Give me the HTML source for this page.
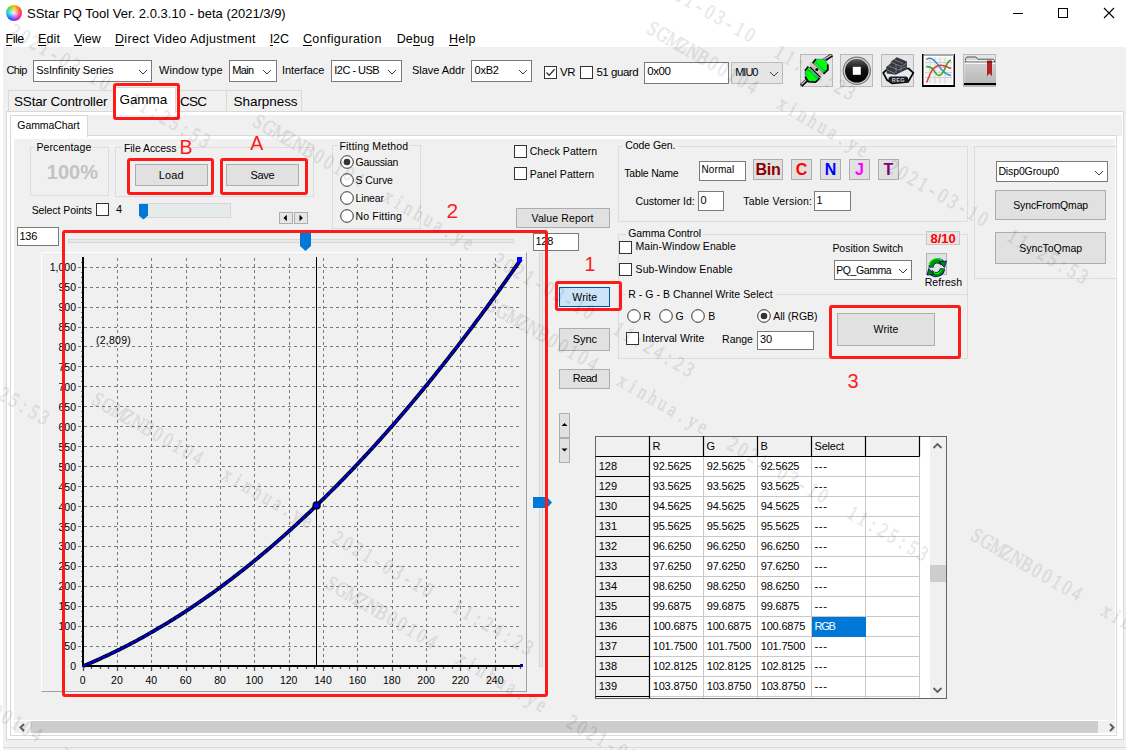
<!DOCTYPE html><html><head><meta charset="utf-8"><style>
html,body{margin:0;padding:0;}
body{width:1126px;height:750px;position:relative;overflow:hidden;background:#fff;font-family:"Liberation Sans",sans-serif;color:#000;}
.t{position:absolute;white-space:nowrap;line-height:1;}
.r{position:absolute;box-sizing:border-box;}
svg.r{overflow:visible;}
.u{text-decoration:underline;text-underline-offset:2px;}
.wm{transform-origin:0 0;transform:rotate(29.96deg) scaleX(0.78);font-family:'Liberation Serif',serif;font-size:21px;color:#000;-webkit-text-stroke:0.6px #000;opacity:0.09;pointer-events:none;}
.wm b{display:inline-block;width:14.81px;text-align:center;font-weight:normal;}
</style></head><body>
<div class="r" style="left:6px;top:5px;width:16px;height:16px;border-radius:50%;background:conic-gradient(from 0deg,#ffc000,#ff5020 60deg,#ff2080 120deg,#8030ff 180deg,#2060ff 220deg,#20d0f0 270deg,#40e040 310deg,#ffc000)"></div>
<div class="r" style="left:6px;top:5px;width:16px;height:16px;border-radius:50%;background:radial-gradient(circle,#fff 0,rgba(255,255,255,0.6) 20%,rgba(255,255,255,0) 60%)"></div>
<div class="t" style="left:27.00px;top:7.00px;font-size:13.00px;letter-spacing:0.005px;color:#000;">SStar PQ Tool Ver. 2.0.3.10 - beta (2021/3/9)</div>
<div class="r" style="left:1013.00px;top:13.00px;width:10.00px;height:1.00px;background:#000;"></div>
<div class="r" style="left:1058.00px;top:8.00px;width:10.00px;height:10.00px;border:1px solid #000;"></div>
<svg class="r" style="left:1103px;top:7px" width="12" height="12" viewBox="0 0 12 12"><path d="M1 1 L11 11 M11 1 L1 11" stroke="#000" stroke-width="1.1"/></svg>
<div class="t" style="left:5.60px;top:33.02px;font-size:12.50px;letter-spacing:-0.511px;">File</div>
<div class="r" style="left:5.60px;top:44.50px;width:6.63px;height:1.00px;background:#000;"></div>
<div class="t" style="left:38.00px;top:33.02px;font-size:12.50px;letter-spacing:0.115px;">Edit</div>
<div class="r" style="left:38.00px;top:44.50px;width:7.95px;height:1.00px;background:#000;"></div>
<div class="t" style="left:74.00px;top:33.02px;font-size:12.50px;letter-spacing:-0.017px;">View</div>
<div class="r" style="left:74.00px;top:44.50px;width:7.82px;height:1.00px;background:#000;"></div>
<div class="t" style="left:115.00px;top:33.02px;font-size:12.50px;letter-spacing:0.331px;">Direct Video Adjustment</div>
<div class="r" style="left:115.00px;top:44.50px;width:8.86px;height:1.00px;background:#000;"></div>
<div class="t" style="left:269.70px;top:33.02px;font-size:12.50px;letter-spacing:-0.051px;">I2C</div>
<div class="r" style="left:269.70px;top:44.50px;width:2.92px;height:1.00px;background:#000;"></div>
<div class="t" style="left:303.00px;top:33.02px;font-size:12.50px;letter-spacing:0.334px;">Configuration</div>
<div class="r" style="left:303.00px;top:44.50px;width:8.86px;height:1.00px;background:#000;"></div>
<div class="t" style="left:396.70px;top:33.02px;font-size:12.50px;letter-spacing:0.153px;">Debug</div>
<div class="r" style="left:412.99px;top:44.50px;width:6.60px;height:1.00px;background:#000;"></div>
<div class="t" style="left:449.00px;top:33.02px;font-size:12.50px;letter-spacing:0.223px;">Help</div>
<div class="r" style="left:449.00px;top:44.50px;width:8.75px;height:1.00px;background:#000;"></div>
<div class="r" style="left:3.00px;top:47.00px;width:1123.00px;height:703.00px;background:#f0f0f0;"></div>
<div class="r" style="left:3.00px;top:747.00px;width:1123.00px;height:1.00px;background:#dadada;"></div>
<div class="t" style="left:6.40px;top:65.29px;font-size:11.00px;letter-spacing:-0.581px;">Chip</div>
<div class="r" style="left:33.00px;top:60.00px;width:119.00px;height:21.50px;background:#fff;border:1px solid #7a7a7a;"></div>
<div class="t" style="left:36.30px;top:65.09px;font-size:11.00px;letter-spacing:-0.110px;color:#000;">SsInfinity Series</div>
<svg class="r" style="left:137.5px;top:68.5px" width="10" height="6" viewBox="0 0 10 6"><path d="M1 1 L5 5 L9 1" fill="none" stroke="#404040" stroke-width="1"/></svg>
<div class="t" style="left:159.00px;top:65.29px;font-size:11.00px;letter-spacing:0.057px;">Window type</div>
<div class="r" style="left:229.00px;top:60.00px;width:47.50px;height:21.50px;background:#fff;border:1px solid #7a7a7a;"></div>
<div class="t" style="left:232.30px;top:65.09px;font-size:11.00px;letter-spacing:-0.636px;color:#000;">Main</div>
<svg class="r" style="left:262.0px;top:68.5px" width="10" height="6" viewBox="0 0 10 6"><path d="M1 1 L5 5 L9 1" fill="none" stroke="#404040" stroke-width="1"/></svg>
<div class="t" style="left:282.00px;top:65.29px;font-size:11.00px;letter-spacing:-0.067px;">Interface</div>
<div class="r" style="left:331.00px;top:60.00px;width:70.50px;height:21.50px;background:#fff;border:1px solid #7a7a7a;"></div>
<div class="t" style="left:334.30px;top:65.09px;font-size:11.00px;letter-spacing:-0.512px;color:#000;">I2C - USB</div>
<svg class="r" style="left:387.0px;top:68.5px" width="10" height="6" viewBox="0 0 10 6"><path d="M1 1 L5 5 L9 1" fill="none" stroke="#404040" stroke-width="1"/></svg>
<div class="t" style="left:412.00px;top:65.29px;font-size:11.00px;letter-spacing:-0.040px;">Slave Addr</div>
<div class="r" style="left:471.00px;top:60.00px;width:61.00px;height:21.50px;background:#fff;border:1px solid #7a7a7a;"></div>
<div class="t" style="left:474.60px;top:65.09px;font-size:11.00px;letter-spacing:-0.243px;color:#000;">0xB2</div>
<svg class="r" style="left:517.5px;top:68.5px" width="10" height="6" viewBox="0 0 10 6"><path d="M1 1 L5 5 L9 1" fill="none" stroke="#404040" stroke-width="1"/></svg>
<div class="r" style="left:544.00px;top:66.00px;width:13.00px;height:13.00px;background:#fff;border:1px solid #333;"></div>
<svg class="r" style="left:544.0px;top:66.0px" width="13" height="13" viewBox="0 0 13 13"><path d="M2.5 6.5 L5.2 9.3 L10.6 3.2" fill="none" stroke="#333" stroke-width="1.3"/></svg>
<div class="t" style="left:560.00px;top:67.27px;font-size:11.50px;letter-spacing:-0.488px;">VR</div>
<div class="r" style="left:580.00px;top:66.00px;width:13.00px;height:13.00px;background:#fff;border:1px solid #333;"></div>
<div class="t" style="left:596.40px;top:67.27px;font-size:11.50px;letter-spacing:-0.450px;">51 guard</div>
<div class="r" style="left:644.00px;top:62.00px;width:85.00px;height:21.50px;background:#fff;border:1px solid #7a7a7a;"></div>
<div class="t" style="left:647.20px;top:66.37px;font-size:11.50px;letter-spacing:-0.409px;">0x00</div>
<div class="r" style="left:731.00px;top:62.00px;width:52.00px;height:21.50px;background:#e5e5e5;border:1px solid #bcbcbc;"></div>
<div class="t" style="left:735.20px;top:67.19px;font-size:11.00px;letter-spacing:-0.995px;color:#000;">MIU0</div>
<svg class="r" style="left:768.5px;top:70.5px" width="10" height="6" viewBox="0 0 10 6"><path d="M1 1 L5 5 L9 1" fill="none" stroke="#404040" stroke-width="1"/></svg>
<div class="r" style="left:800.00px;top:54.00px;width:33.00px;height:33.00px;background:#e5e5e5;border:1px solid #b9b9b9;"></div>
<div class="r" style="left:840.00px;top:54.00px;width:33.00px;height:33.00px;background:#e5e5e5;border:1px solid #b9b9b9;"></div>
<div class="r" style="left:881.00px;top:54.00px;width:33.00px;height:33.00px;background:#e5e5e5;border:1px solid #b9b9b9;"></div>
<div class="r" style="left:922.00px;top:54.00px;width:33.00px;height:33.00px;background:#e5e5e5;border:1px solid #b9b9b9;"></div>
<div class="r" style="left:963.00px;top:54.00px;width:33.00px;height:33.00px;background:#e5e5e5;border:1px solid #b9b9b9;"></div>
<svg class="r" style="left:800px;top:54px;overflow:hidden" width="33" height="33" viewBox="0 0 33 33">
<path d="M1.2 31.5 L8.5 24.5" stroke="#000" stroke-width="3.6"/><path d="M1.5 30.5 L8.5 23.8" stroke="#c8c8c8" stroke-width="1.4"/>
<path d="M23 7 L32 1" stroke="#000" stroke-width="3.6"/><path d="M23 6.2 L31.5 0.8" stroke="#c8c8c8" stroke-width="1.4"/>
<circle cx="8" cy="24.5" r="1.8" fill="#e0d8d0"/><circle cx="24" cy="7" r="1.8" fill="#e0d8d0"/>
<path d="M9.5 11.5 L13.5 7.5 L24 18 L20 22.5 Z" fill="#d9c9b3"/><path d="M10 13 L20.5 23.5" stroke="#000" stroke-width="1.2"/>
<circle cx="16.8" cy="15.4" r="1.5" fill="#000"/>
<g transform="translate(0.9 -0.9)"><path d="M12.2 9.7 L15.2 6.1 L23.3 6.1 L26.9 11.2 L26.9 16.7 L22.8 20.3 Z" fill="#00ff00" stroke="#3a66d8" stroke-width="0.7"/>
<path d="M11.8 10 L15 6 M26.9 11.5 L26.9 16.8 L22.6 20.8" fill="none" stroke="#000" stroke-width="1.7"/>
<path d="M15.2 9.2 L24.5 18.5" stroke="#3a66d8" stroke-width="0.8"/></g>
<g transform="translate(-0.7 0.7)"><path d="M9.1 12.2 L19.8 23.3 L16.2 26.9 L9.1 26.4 L6.1 21.8 L6.1 16.2 Z" fill="#00ff00" stroke="#3a66d8" stroke-width="0.7"/>
<path d="M5.6 16 L9 11.8 M20.2 23.6 L16.3 27.5 L9 27 L5.8 22" fill="none" stroke="#000" stroke-width="1.6"/>
<path d="M8.8 15 L18.5 24.6" stroke="#3a66d8" stroke-width="0.8"/></g>
</svg>
<svg class="r" style="left:840px;top:54px" width="33" height="33" viewBox="0 0 33 33">
<defs><linearGradient id="sg" x1="0" y1="0" x2="0" y2="1"><stop offset="0" stop-color="#5a5a5a"/><stop offset="0.45" stop-color="#111"/><stop offset="1" stop-color="#000"/></linearGradient></defs>
<circle cx="16.8" cy="16.8" r="13.6" fill="#d4d4d4" stroke="#7a7a7a" stroke-width="1.2"/>
<circle cx="16.8" cy="16.8" r="11.8" fill="url(#sg)"/>
<rect x="12.8" y="12.8" width="8" height="8" fill="#fff"/>
</svg>
<svg class="r" style="left:881px;top:54px" width="33" height="33" viewBox="0 0 33 33">
<path d="M2.2 18.8 L7 14.5 H27.5 L32.4 18.8 L27 28 L11 29.3 L6 26 Z" fill="#e6ebf0" stroke="#050505" stroke-width="1.7" stroke-linejoin="round"/>
<path d="M5.2 13 L9.5 9.5 L10 7.5 L15.8 3.2 L25.9 7.6 L25.9 15.3 L14.8 20.8 L5.7 19.6 Z" fill="#34383e"/>
<path d="M10 8 L20 12.5 L25.5 9.5 M7 11.5 L17 16 L25.5 12.5 M5.5 15.5 L14 19.5 M13 5.5 L22 9.5 M15 10 V19 M20 12.5 V17.5" stroke="#7b828a" stroke-width="0.9" fill="none"/>
<rect x="7.4" y="22.5" width="19.9" height="6" rx="3" fill="#1a1a1a"/>
<text x="17.4" y="27.6" font-family="Liberation Sans" font-size="5.6" font-weight="bold" fill="#d0d0d0" text-anchor="middle" letter-spacing="0.4">REG</text>
</svg>
<svg class="r" style="left:922px;top:54px" width="33" height="33" viewBox="0 0 33 33">
<rect x="0" y="0" width="33" height="33" fill="#000"/>
<rect x="1.5" y="0" width="30.5" height="2" fill="#a8a8a8"/>
<rect x="1.5" y="2" width="30" height="29" fill="#fff"/>
<rect x="3" y="3.5" width="27" height="26" fill="#f2f2f2"/>
<path d="M8 3.5 V29.5 M13 3.5 V29.5 M18 3.5 V29.5 M23 3.5 V29.5 M3 8.5 H30 M3 13.5 H30 M3 18.5 H30 M3 23.5 H30" stroke="#d2d2d2" stroke-width="1"/>
<path d="M4.4 5.5 C6 4.2, 8 3.8, 10 4.8 C14 7, 17 12, 20 16 C23 19.5, 26 21, 28.9 21.5" fill="none" stroke="#2a90d8" stroke-width="1.5"/>
<path d="M4.4 12.6 C7 12.4, 9 13, 11.5 16 C13.5 19, 15 21.5, 17 21.5 C20 21.5, 22 17, 24 12 C25.5 8.5, 27 6.5, 28.9 6.2" fill="none" stroke="#3aa020" stroke-width="1.5"/>
<path d="M4.7 28.6 C7 22, 9 17, 12 14 C14.5 11.8, 16.5 11, 19 11.2 C23 11.5, 26 13, 28.9 14.7" fill="none" stroke="#d84030" stroke-width="1.5"/>
</svg>
<svg class="r" style="left:963px;top:54px" width="33" height="33" viewBox="0 0 33 33">
<defs><linearGradient id="fg" x1="0" y1="0" x2="0" y2="1"><stop offset="0" stop-color="#d2d2d2"/><stop offset="1" stop-color="#b8b8b8"/></linearGradient></defs>
<path d="M2.5 12 V4.5 L4 3 H13 L15 5.2 H30.5 L31.5 6.5 V12 Z" fill="#d8d8d8" stroke="#555" stroke-width="1"/>
<path d="M2.5 6.5 H31" stroke="#f0f0f0" stroke-width="1"/>
<rect x="1.5" y="8.5" width="31" height="21" fill="url(#fg)"/>
<rect x="1.5" y="8.3" width="31" height="1.6" fill="#fafafa"/>
<path d="M1.5 8 H32.5" stroke="#606060" stroke-width="0.8"/>
<rect x="1" y="29" width="32" height="2.2" fill="#000"/>
<path d="M24 6.8 H29 V22.2 L26.5 19.5 L24 22.2 Z" fill="#b02428"/>
<rect x="24" y="6.8" width="5" height="1.8" fill="#801818"/>
</svg>
<div class="r" style="left:6.00px;top:111.00px;width:1118.00px;height:629.00px;background:#fff;border:1px solid #d9d9d9;"></div>
<div class="r" style="left:8.00px;top:90.00px;width:107.00px;height:22.00px;background:#f0f0f0;border:1px solid #d9d9d9;"></div>
<div class="r" style="left:175.00px;top:90.00px;width:52.00px;height:22.00px;background:#f0f0f0;border:1px solid #d9d9d9;"></div>
<div class="r" style="left:226.00px;top:90.00px;width:76.00px;height:22.00px;background:#f0f0f0;border:1px solid #d9d9d9;"></div>
<div class="r" style="left:113.00px;top:87.00px;width:63.00px;height:26.00px;background:#fff;border:1px solid #d9d9d9;border-bottom:none;"></div>
<div class="t" style="left:14.00px;top:94.57px;font-size:13.50px;letter-spacing:-0.171px;">SStar Controller</div>
<div class="t" style="left:119.50px;top:92.57px;font-size:13.50px;letter-spacing:-0.082px;">Gamma</div>
<div class="t" style="left:180.00px;top:94.57px;font-size:13.50px;letter-spacing:-0.768px;">CSC</div>
<div class="t" style="left:233.60px;top:94.57px;font-size:13.50px;letter-spacing:-0.071px;">Sharpness</div>
<div class="r" style="left:10.00px;top:115.00px;width:1112.00px;height:21.00px;background:#f0f0f0;"></div>
<div class="r" style="left:10.00px;top:135.00px;width:1107.00px;height:601.00px;background:#fff;border:1px solid #d9d9d9;"></div>
<div class="r" style="left:10.00px;top:115.00px;width:78.00px;height:22.00px;background:#fff;border:1px solid #d9d9d9;border-bottom:none;"></div>
<div class="t" style="left:17.30px;top:119.81px;font-size:10.50px;letter-spacing:-0.082px;">GammaChart</div>
<div class="r" style="left:14.00px;top:139.00px;width:1101.00px;height:581.00px;background:#f0f0f0;"></div>
<div class="r" style="left:14.00px;top:721.00px;width:1101.00px;height:12.00px;background:#f0f0f0;"></div>
<div class="r" style="left:31.00px;top:721.00px;width:1067.00px;height:12.00px;background:#cdcdcd;"></div>
<svg class="r" style="left:18px;top:723px" width="8" height="9" viewBox="0 0 8 9"><path d="M6 1 L2.5 4.5 L6 8" fill="none" stroke="#606060" stroke-width="2"/></svg>
<svg class="r" style="left:1108px;top:723px" width="8" height="9" viewBox="0 0 8 9"><path d="M2 1 L5.5 4.5 L2 8" fill="none" stroke="#606060" stroke-width="2"/></svg>
<div class="r" style="left:29.5px;top:146.5px;width:79.5px;height:49.0px;border-top:1px solid #dcdcdc;border-left:1px solid #dcdcdc;border-right:1px solid #dcdcdc;border-bottom:1px solid #dcdcdc;"></div>
<div class="r" style="left:34.40px;top:144.50px;width:59.00px;height:5.00px;background:#f0f0f0;"></div>
<div class="t" style="left:36.40px;top:142.11px;font-size:10.50px;letter-spacing:0.129px;">Percentage</div>
<div class="t" style="left:46.80px;top:162.27px;font-size:20.00px;color:#c3c3c3;font-weight:bold;">100%</div>
<div class="r" style="left:114.5px;top:147.0px;width:199.5px;height:49.5px;border-top:1px solid #dcdcdc;border-left:1px solid #dcdcdc;border-right:1px solid #dcdcdc;border-bottom:1px solid #dcdcdc;"></div>
<div class="r" style="left:122.00px;top:145.00px;width:56.40px;height:5.00px;background:#f0f0f0;"></div>
<div class="t" style="left:124.00px;top:142.61px;font-size:10.50px;letter-spacing:-0.064px;">File Access</div>
<div class="r" style="left:134.80px;top:164.20px;width:72.90px;height:21.50px;background:#e1e1e1;border:1px solid #adadad;"></div>
<div class="t" style="left:158.75px;top:169.60px;font-size:11.00px;letter-spacing:0.132px;color:#000;">Load</div>
<div class="r" style="left:225.90px;top:164.20px;width:73.10px;height:21.50px;background:#e1e1e1;border:1px solid #adadad;"></div>
<div class="t" style="left:250.45px;top:169.60px;font-size:11.00px;letter-spacing:-0.268px;color:#000;">Save</div>
<div class="t" style="left:31.70px;top:204.81px;font-size:10.50px;letter-spacing:-0.083px;">Select Points</div>
<div class="r" style="left:96.00px;top:203.00px;width:13.00px;height:13.00px;background:#fff;border:1px solid #333;"></div>
<div class="t" style="left:116.00px;top:204.39px;font-size:11.00px;">4</div>
<div class="r" style="left:139.00px;top:203.00px;width:92.00px;height:15.00px;background:#e7eaea;border:1px solid #d6d6d6;"></div>
<svg class="r" style="left:139px;top:203.5px" width="9" height="16" viewBox="0 0 9 16"><path d="M0 0 H9 V11.5 L4.5 15.5 L0 11.5 Z" fill="#0078d7"/></svg>
<div class="r" style="left:279.00px;top:212.00px;width:14.00px;height:12.00px;background:#e6e6e6;border:1px solid #adadad;"></div>
<div class="r" style="left:294.20px;top:212.00px;width:13.80px;height:12.00px;background:#e6e6e6;border:1px solid #adadad;"></div>
<svg class="r" style="left:282px;top:214px" width="8" height="8"><path d="M1.5 4 L4.8 0.8 V7.2 Z" fill="#000"/></svg>
<svg class="r" style="left:296.5px;top:214px" width="8" height="8"><path d="M5.8 4 L2.5 0.8 V7.2 Z" fill="#000"/></svg>
<div class="r" style="left:332.0px;top:145.0px;width:89.0px;height:83.5px;border-top:1px solid #dcdcdc;border-left:1px solid #dcdcdc;border-right:1px solid #dcdcdc;border-bottom:1px solid #dcdcdc;"></div>
<div class="r" style="left:337.50px;top:143.00px;width:72.80px;height:5.00px;background:#f0f0f0;"></div>
<div class="t" style="left:339.50px;top:141.11px;font-size:10.50px;letter-spacing:0.162px;">Fitting Method</div>
<svg class="r" style="left:339.7px;top:155.0px" width="14" height="14" viewBox="0 0 14 14"><circle cx="7" cy="7" r="6.3" fill="#fff" stroke="#333" stroke-width="1"/><circle cx="7" cy="7" r="3.3" fill="#333"/></svg>
<div class="t" style="left:355.50px;top:157.11px;font-size:10.50px;letter-spacing:-0.207px;">Gaussian</div>
<svg class="r" style="left:339.7px;top:173.0px" width="14" height="14" viewBox="0 0 14 14"><circle cx="7" cy="7" r="6.3" fill="#fff" stroke="#333" stroke-width="1"/></svg>
<div class="t" style="left:355.50px;top:175.11px;font-size:10.50px;letter-spacing:-0.090px;">S Curve</div>
<svg class="r" style="left:339.7px;top:191.0px" width="14" height="14" viewBox="0 0 14 14"><circle cx="7" cy="7" r="6.3" fill="#fff" stroke="#333" stroke-width="1"/></svg>
<div class="t" style="left:355.50px;top:193.11px;font-size:10.50px;letter-spacing:-0.132px;">Linear</div>
<svg class="r" style="left:339.7px;top:209.0px" width="14" height="14" viewBox="0 0 14 14"><circle cx="7" cy="7" r="6.3" fill="#fff" stroke="#333" stroke-width="1"/></svg>
<div class="t" style="left:355.50px;top:211.11px;font-size:10.50px;letter-spacing:0.157px;">No Fitting</div>
<div class="r" style="left:514.20px;top:144.50px;width:13.00px;height:13.00px;background:#fff;border:1px solid #333;"></div>
<div class="t" style="left:529.70px;top:146.11px;font-size:10.50px;letter-spacing:0.082px;">Check Pattern</div>
<div class="r" style="left:514.20px;top:167.00px;width:13.00px;height:13.00px;background:#fff;border:1px solid #333;"></div>
<div class="t" style="left:529.70px;top:169.11px;font-size:10.50px;letter-spacing:0.059px;">Panel Pattern</div>
<div class="r" style="left:515.50px;top:208.20px;width:94.10px;height:19.80px;background:#e1e1e1;border:1px solid #adadad;"></div>
<div class="t" style="left:531.55px;top:212.99px;font-size:10.50px;letter-spacing:0.124px;color:#000;">Value Report</div>
<div class="r" style="left:617.5px;top:145.5px;width:350.5px;height:76.0px;border-top:1px solid #dcdcdc;border-left:1px solid #dcdcdc;border-right:1px solid #dcdcdc;border-bottom:1px solid #dcdcdc;"></div>
<div class="r" style="left:623.20px;top:143.50px;width:54.30px;height:5.00px;background:#f0f0f0;"></div>
<div class="t" style="left:625.20px;top:139.71px;font-size:10.50px;letter-spacing:-0.054px;">Code Gen.</div>
<div class="t" style="left:624.30px;top:168.11px;font-size:10.50px;letter-spacing:-0.183px;">Table Name</div>
<div class="r" style="left:699.00px;top:161.00px;width:47.00px;height:20.00px;background:#fff;border:1px solid #7a7a7a;"></div>
<div class="t" style="left:701.50px;top:165.34px;font-size:10.00px;letter-spacing:0.095px;">Normal</div>
<div class="r" style="left:753.00px;top:159.20px;width:30.00px;height:20.80px;background:#e1e1e1;border:1px solid #adadad;"></div>
<div class="t" style="left:755.40px;top:162.06px;font-size:16.00px;letter-spacing:-0.191px;color:#8b0000;font-weight:bold;">Bin</div>
<div class="r" style="left:791.00px;top:159.20px;width:21.00px;height:20.80px;background:#e1e1e1;border:1px solid #adadad;"></div>
<div class="t" style="left:795.72px;top:162.06px;font-size:16.00px;color:#ff0000;font-weight:bold;">C</div>
<div class="r" style="left:820.00px;top:159.20px;width:21.00px;height:20.80px;background:#e1e1e1;border:1px solid #adadad;"></div>
<div class="t" style="left:824.72px;top:162.06px;font-size:16.00px;color:#0000ff;font-weight:bold;">N</div>
<div class="r" style="left:849.00px;top:159.20px;width:21.00px;height:20.80px;background:#e1e1e1;border:1px solid #adadad;"></div>
<div class="t" style="left:855.05px;top:162.06px;font-size:16.00px;color:#ff00ff;font-weight:bold;">J</div>
<div class="r" style="left:878.00px;top:159.20px;width:21.00px;height:20.80px;background:#e1e1e1;border:1px solid #adadad;"></div>
<div class="t" style="left:883.61px;top:162.06px;font-size:16.00px;color:#800080;font-weight:bold;">T</div>
<div class="t" style="left:635.50px;top:195.71px;font-size:10.50px;letter-spacing:-0.092px;">Customer Id:</div>
<div class="r" style="left:698.00px;top:191.00px;width:26.00px;height:20.00px;background:#fff;border:1px solid #7a7a7a;"></div>
<div class="t" style="left:700.50px;top:195.19px;font-size:11.00px;">0</div>
<div class="t" style="left:743.20px;top:195.71px;font-size:10.50px;letter-spacing:0.217px;">Table Version:</div>
<div class="r" style="left:814.00px;top:191.00px;width:37.00px;height:20.00px;background:#fff;border:1px solid #7a7a7a;"></div>
<div class="t" style="left:816.50px;top:195.19px;font-size:11.00px;">1</div>
<div class="r" style="left:617.5px;top:233.5px;width:350.5px;height:125.0px;border-top:1px solid #dcdcdc;border-left:1px solid #dcdcdc;border-right:1px solid #dcdcdc;border-bottom:1px solid #dcdcdc;"></div>
<div class="r" style="left:626.20px;top:231.50px;width:76.80px;height:5.00px;background:#f0f0f0;"></div>
<div class="t" style="left:628.20px;top:228.31px;font-size:10.50px;letter-spacing:-0.101px;">Gamma Control</div>
<div class="r" style="left:619.30px;top:240.50px;width:13.00px;height:13.00px;background:#fff;border:1px solid #333;"></div>
<div class="t" style="left:635.50px;top:241.01px;font-size:10.50px;letter-spacing:0.066px;">Main-Window Enable</div>
<div class="r" style="left:619.30px;top:263.30px;width:13.00px;height:13.00px;background:#fff;border:1px solid #333;"></div>
<div class="t" style="left:635.50px;top:263.81px;font-size:10.50px;letter-spacing:0.127px;">Sub-Window Enable</div>
<div class="t" style="left:832.40px;top:243.11px;font-size:10.50px;letter-spacing:-0.027px;">Position Switch</div>
<div class="r" style="left:834.00px;top:260.40px;width:78.00px;height:20.10px;background:#fff;border:1px solid #7a7a7a;"></div>
<div class="t" style="left:836.30px;top:265.11px;font-size:10.50px;letter-spacing:-0.431px;color:#000;">PQ_Gamma</div>
<svg class="r" style="left:897.5px;top:268.2px" width="10" height="6" viewBox="0 0 10 6"><path d="M1 1 L5 5 L9 1" fill="none" stroke="#404040" stroke-width="1"/></svg>
<div class="r" style="left:926.30px;top:230.50px;width:33.70px;height:14.00px;background:#e5e5e5;border:1px solid #c8c8c8;"></div>
<div class="t" style="left:930.60px;top:231.70px;font-size:13.00px;letter-spacing:-0.076px;color:#ff0000;font-weight:bold;">8/10</div>
<div class="r" style="left:926.00px;top:253.00px;width:20.50px;height:22.00px;background:#e1e1e1;border:1px solid #b4b4b4;"></div>
<svg class="r" style="left:926px;top:253px" width="21" height="23" viewBox="0 0 21 23">
<path d="M5 14.5 A6.5 6.5 0 0 1 17 11" fill="none" stroke="#000080" stroke-width="5"/>
<path d="M5 14.5 A6.5 6.5 0 0 1 17 11" fill="none" stroke="#008a00" stroke-width="3.6"/>
<path d="M3.6 12 A7.5 7.5 0 0 1 16 7.5" fill="none" stroke="#00ff00" stroke-width="1.3"/>
<path d="M13 9 L20.5 8 L18.5 14.5 Z" fill="#008a00" stroke="#000080" stroke-width="0.8"/>
<path d="M16.5 15.5 A6.5 6.5 0 0 1 4.5 18.5" fill="none" stroke="#000080" stroke-width="5"/>
<path d="M16.5 15.5 A6.5 6.5 0 0 1 4.5 18.5" fill="none" stroke="#008a00" stroke-width="3.6"/>
<path d="M15.2 16.5 A4.5 4.5 0 0 1 8 19.5" fill="none" stroke="#00ff00" stroke-width="1.2"/>
<path d="M8 21.5 L1 22 L2.8 15.5 Z" fill="#008a00" stroke="#000080" stroke-width="0.8"/>
</svg>
<div class="t" style="left:924.70px;top:277.11px;font-size:10.50px;letter-spacing:0.091px;">Refresh</div>
<div class="r" style="left:617.50px;top:294.00px;width:350.50px;height:1.00px;background:#dcdcdc;"></div>
<div class="r" style="left:626.00px;top:290.00px;width:150.00px;height:6.00px;background:#f0f0f0;"></div>
<div class="t" style="left:628.20px;top:288.91px;font-size:10.50px;letter-spacing:0.058px;">R - G - B Channel Write Select</div>
<svg class="r" style="left:626.5px;top:308.8px" width="14" height="14" viewBox="0 0 14 14"><circle cx="7" cy="7" r="6.3" fill="#fff" stroke="#333" stroke-width="1"/></svg>
<div class="t" style="left:643.30px;top:310.51px;font-size:10.50px;">R</div>
<svg class="r" style="left:658.8px;top:308.8px" width="14" height="14" viewBox="0 0 14 14"><circle cx="7" cy="7" r="6.3" fill="#fff" stroke="#333" stroke-width="1"/></svg>
<div class="t" style="left:675.50px;top:310.51px;font-size:10.50px;">G</div>
<svg class="r" style="left:691.2px;top:308.8px" width="14" height="14" viewBox="0 0 14 14"><circle cx="7" cy="7" r="6.3" fill="#fff" stroke="#333" stroke-width="1"/></svg>
<div class="t" style="left:708.30px;top:310.51px;font-size:10.50px;">B</div>
<svg class="r" style="left:756.5px;top:308.8px" width="14" height="14" viewBox="0 0 14 14"><circle cx="7" cy="7" r="6.3" fill="#fff" stroke="#333" stroke-width="1"/><circle cx="7" cy="7" r="3.3" fill="#333"/></svg>
<div class="t" style="left:773.20px;top:310.51px;font-size:10.50px;letter-spacing:0.007px;">All (RGB)</div>
<div class="r" style="left:626.20px;top:332.00px;width:13.00px;height:13.00px;background:#fff;border:1px solid #333;"></div>
<div class="t" style="left:642.20px;top:333.11px;font-size:10.50px;letter-spacing:0.039px;">Interval Write</div>
<div class="t" style="left:722.10px;top:333.81px;font-size:10.50px;letter-spacing:-0.048px;">Range</div>
<div class="r" style="left:757.20px;top:330.50px;width:56.80px;height:19.00px;background:#fff;border:1px solid #7a7a7a;"></div>
<div class="t" style="left:760.00px;top:334.19px;font-size:11.00px;">30</div>
<div class="r" style="left:837.20px;top:313.00px;width:97.80px;height:33.00px;background:#e1e1e1;border:1px solid #adadad;"></div>
<div class="t" style="left:873.60px;top:324.39px;font-size:10.50px;letter-spacing:0.138px;color:#000;">Write</div>
<div class="r" style="left:974.4px;top:146.4px;width:141.6px;height:133.1px;border-top:1px solid #dcdcdc;border-left:1px solid #dcdcdc;border-bottom:1px solid #dcdcdc;"></div>
<div class="r" style="left:996.00px;top:161.30px;width:112.00px;height:20.70px;background:#fff;border:1px solid #7a7a7a;"></div>
<div class="t" style="left:998.40px;top:166.31px;font-size:10.50px;letter-spacing:-0.124px;color:#000;">Disp0Group0</div>
<svg class="r" style="left:1093.5px;top:169.5px" width="10" height="6" viewBox="0 0 10 6"><path d="M1 1 L5 5 L9 1" fill="none" stroke="#404040" stroke-width="1"/></svg>
<div class="r" style="left:995.30px;top:189.60px;width:110.70px;height:30.90px;background:#e1e1e1;border:1px solid #adadad;"></div>
<div class="t" style="left:1013.20px;top:200.41px;font-size:10.50px;letter-spacing:-0.128px;color:#000;">SyncFromQmap</div>
<div class="r" style="left:995.30px;top:232.00px;width:110.70px;height:32.00px;background:#e1e1e1;border:1px solid #adadad;"></div>
<div class="t" style="left:1019.20px;top:243.11px;font-size:10.50px;letter-spacing:-0.013px;color:#000;">SyncToQmap</div>
<div class="r" style="left:559.20px;top:286.90px;width:51.30px;height:19.90px;background:#cce4f7;border:1px solid #005499;"></div>
<div class="t" style="left:572.35px;top:291.74px;font-size:10.50px;letter-spacing:0.138px;color:#000;">Write</div>
<div class="r" style="left:559.20px;top:328.00px;width:51.30px;height:22.50px;background:#e1e1e1;border:1px solid #adadad;"></div>
<div class="t" style="left:572.85px;top:333.90px;font-size:11.00px;letter-spacing:-0.114px;color:#000;">Sync</div>
<div class="r" style="left:559.20px;top:369.00px;width:51.30px;height:19.50px;background:#e1e1e1;border:1px solid #adadad;"></div>
<div class="t" style="left:572.85px;top:373.40px;font-size:11.00px;letter-spacing:-0.574px;color:#000;">Read</div>
<div class="r" style="left:559.20px;top:413.20px;width:10.80px;height:25.30px;background:#e1e1e1;border:1px solid #adadad;"></div>
<div class="r" style="left:559.20px;top:437.50px;width:10.80px;height:25.00px;background:#e1e1e1;border:1px solid #adadad;"></div>
<svg class="r" style="left:561px;top:422px" width="7" height="6"><path d="M0.5 4 L3.5 1 L6.5 4 Z" fill="#000"/></svg>
<svg class="r" style="left:561px;top:447px" width="7" height="6"><path d="M0.5 1.5 L3.5 4.5 L6.5 1.5 Z" fill="#000"/></svg>
<div class="r" style="left:17.10px;top:227.30px;width:41.90px;height:18.70px;background:#fff;border:1px solid #7a7a7a;"></div>
<div class="t" style="left:19.50px;top:230.69px;font-size:11.00px;letter-spacing:-0.285px;">136</div>
<div class="r" style="left:533.20px;top:232.50px;width:45.80px;height:18.50px;background:#fff;border:1px solid #7a7a7a;"></div>
<div class="t" style="left:535.50px;top:235.69px;font-size:11.00px;letter-spacing:-0.285px;">128</div>
<div class="r" style="left:41.00px;top:252.00px;width:486.00px;height:439.50px;background:#f0f0f0;border-left:1px solid #fff;border-top:1px solid #fff;border-right:1px solid #a0a0a0;border-bottom:1px solid #a0a0a0;"></div>
<div class="r" style="left:68.00px;top:239.00px;width:446.00px;height:4.00px;background:#e7eaea;border:1px solid #d6d6d6;"></div>
<svg class="r" style="left:300px;top:233px" width="11" height="18" viewBox="0 0 11 18"><path d="M0 0 H11 V13 L5.5 18 L0 13 Z" fill="#0078d7"/></svg>
<div class="r" style="left:539.40px;top:253.40px;width:3.60px;height:413.60px;background:#e7eaea;border:1px solid #d6d6d6;"></div>
<svg class="r" style="left:532.7px;top:497.3px" width="19" height="11" viewBox="0 0 19 11"><path d="M0 0 H14 L19 5.5 L14 11 H0 Z" fill="#0078d7"/></svg>
<svg class="r" style="left:0;top:0" width="1126" height="750" viewBox="0 0 1126 750">
<path d="M78 646.5 H519 M78 626.5 H519 M78 606.5 H519 M78 586.5 H519 M78 566.5 H519 M78 546.5 H519 M78 526.5 H519 M78 506.5 H519 M78 486.5 H519 M78 466.5 H519 M78 446.5 H519 M78 426.5 H519 M78 406.5 H519 M78 386.5 H519 M78 366.5 H519 M78 346.5 H519 M78 327.5 H519 M78 307.5 H519 M78 287.5 H519 M78 267.5 H519 M117.5 258 V665 M151.5 258 V665 M186.5 258 V665 M220.5 258 V665 M254.5 258 V665 M289.5 258 V665 M323.5 258 V665 M357.5 258 V665 M392.5 258 V665 M426.5 258 V665 M460.5 258 V665 M495.5 258 V665" stroke="#7a7a7a" stroke-width="1" stroke-dasharray="3 3" fill="none"/>
<path d="M83.5 667 V671 M91.5 667 V669 M100.5 667 V669 M108.5 667 V669 M117.5 667 V671 M125.5 667 V669 M134.5 667 V669 M143.5 667 V669 M151.5 667 V671 M160.5 667 V669 M168.5 667 V669 M177.5 667 V669 M186.5 667 V671 M194.5 667 V669 M203.5 667 V669 M211.5 667 V669 M220.5 667 V671 M228.5 667 V669 M237.5 667 V669 M246.5 667 V669 M254.5 667 V671 M263.5 667 V669 M271.5 667 V669 M280.5 667 V669 M289.5 667 V671 M297.5 667 V669 M306.5 667 V669 M314.5 667 V669 M323.5 667 V671 M332.5 667 V669 M340.5 667 V669 M349.5 667 V669 M357.5 667 V671 M366.5 667 V669 M374.5 667 V669 M383.5 667 V669 M392.5 667 V671 M400.5 667 V669 M409.5 667 V669 M417.5 667 V669 M426.5 667 V671 M435.5 667 V669 M443.5 667 V669 M452.5 667 V669 M460.5 667 V671 M469.5 667 V669 M478.5 667 V669 M486.5 667 V669 M495.5 667 V671 M503.5 667 V669 M512.5 667 V669 M520.5 667 V669" stroke="#505050" stroke-width="1.3" fill="none"/>
<path d="M81 661.5 H83.5 M81 656.5 H83.5 M81 651.5 H83.5 M81 641.5 H83.5 M81 636.5 H83.5 M81 631.5 H83.5 M81 621.5 H83.5 M81 616.5 H83.5 M81 611.5 H83.5 M81 601.5 H83.5 M81 596.5 H83.5 M81 591.5 H83.5 M81 581.5 H83.5 M81 576.5 H83.5 M81 571.5 H83.5 M81 561.5 H83.5 M81 556.5 H83.5 M81 551.5 H83.5 M81 541.5 H83.5 M81 536.5 H83.5 M81 531.5 H83.5 M81 521.5 H83.5 M81 516.5 H83.5 M81 511.5 H83.5 M81 501.5 H83.5 M81 496.5 H83.5 M81 491.5 H83.5 M81 481.5 H83.5 M81 476.5 H83.5 M81 471.5 H83.5 M81 461.5 H83.5 M81 456.5 H83.5 M81 451.5 H83.5 M81 441.5 H83.5 M81 436.5 H83.5 M81 431.5 H83.5 M81 421.5 H83.5 M81 416.5 H83.5 M81 411.5 H83.5 M81 401.5 H83.5 M81 396.5 H83.5 M81 391.5 H83.5 M81 381.5 H83.5 M81 376.5 H83.5 M81 371.5 H83.5 M81 361.5 H83.5 M81 356.5 H83.5 M81 351.5 H83.5 M81 341.5 H83.5 M81 337.5 H83.5 M81 332.5 H83.5 M81 322.5 H83.5 M81 317.5 H83.5 M81 312.5 H83.5 M81 302.5 H83.5 M81 297.5 H83.5 M81 292.5 H83.5 M81 282.5 H83.5 M81 277.5 H83.5 M81 272.5 H83.5 M81 262.5 H83.5" stroke="#707070" stroke-width="1" fill="none"/>
<path d="M83 257 V667 M82 666 H522" stroke="#000" stroke-width="2" fill="none"/>
<rect x="520" y="664" width="3" height="3" fill="#0000c0"/>
<path d="M316.5 257 V666" stroke="#000" stroke-width="1"/>
<polyline points="83.00,666.10 84.72,665.39 86.44,664.67 88.15,663.95 89.87,663.21 91.59,662.47 93.31,661.73 95.02,660.97 96.74,660.21 98.46,659.45 100.17,658.67 101.89,657.89 103.61,657.10 105.33,656.31 107.05,655.51 108.76,654.70 110.48,653.88 112.20,653.06 113.91,652.23 115.63,651.39 117.35,650.55 119.07,649.70 120.78,648.84 122.50,647.98 124.22,647.11 125.94,646.23 127.66,645.34 129.37,644.45 131.09,643.55 132.81,642.64 134.53,641.73 136.24,640.81 137.96,639.88 139.68,638.95 141.40,638.01 143.11,637.06 144.83,636.11 146.55,635.14 148.26,634.17 149.98,633.20 151.70,632.22 153.42,631.23 155.13,630.23 156.85,629.23 158.57,628.22 160.29,627.20 162.00,626.17 163.72,625.14 165.44,624.10 167.16,623.06 168.88,622.00 170.59,620.95 172.31,619.88 174.03,618.81 175.75,617.73 177.46,616.64 179.18,615.54 180.90,614.44 182.62,613.33 184.33,612.22 186.05,611.10 187.77,609.97 189.49,608.83 191.20,607.69 192.92,606.54 194.64,605.38 196.36,604.22 198.07,603.05 199.79,601.87 201.51,600.68 203.23,599.49 204.94,598.29 206.66,597.09 208.38,595.88 210.09,594.66 211.81,593.43 213.53,592.20 215.25,590.96 216.97,589.71 218.68,588.45 220.40,587.19 222.12,585.92 223.84,584.65 225.55,583.37 227.27,582.08 228.99,580.78 230.71,579.48 232.42,578.17 234.14,576.85 235.86,575.53 237.57,574.20 239.29,572.86 241.01,571.51 242.73,570.16 244.44,568.80 246.16,567.44 247.88,566.06 249.60,564.68 251.31,563.30 253.03,561.90 254.75,560.50 256.47,559.10 258.19,557.68 259.90,556.26 261.62,554.83 263.34,553.40 265.06,551.95 266.77,550.50 268.49,549.05 270.21,547.58 271.93,546.11 273.64,544.64 275.36,543.15 277.08,541.66 278.80,540.16 280.51,538.66 282.23,537.15 283.95,535.63 285.66,534.10 287.38,532.57 289.10,531.03 290.82,529.48 292.53,527.93 294.25,526.37 295.97,524.80 297.69,523.23 299.40,521.64 301.12,520.06 302.84,518.46 304.56,516.86 306.27,515.25 307.99,513.63 309.71,512.01 311.43,510.38 313.14,508.74 314.86,507.10 316.58,505.44 318.30,503.79 320.01,502.12 321.73,500.45 323.45,498.77 325.17,497.08 326.88,495.39 328.60,493.69 330.32,491.98 332.04,490.27 333.75,488.55 335.47,486.82 337.19,485.09 338.91,483.34 340.62,481.60 342.34,479.84 344.06,478.08 345.78,476.31 347.50,474.53 349.21,472.75 350.93,470.96 352.65,469.16 354.37,467.36 356.08,465.54 357.80,463.73 359.52,461.90 361.24,460.07 362.95,458.23 364.67,456.38 366.39,454.53 368.11,452.67 369.82,450.80 371.54,448.93 373.26,447.05 374.98,445.16 376.69,443.26 378.41,441.36 380.13,439.45 381.85,437.54 383.56,435.61 385.28,433.69 387.00,431.75 388.72,429.80 390.43,427.85 392.15,425.90 393.87,423.93 395.58,421.96 397.30,419.98 399.02,418.00 400.74,416.00 402.45,414.00 404.17,412.00 405.89,409.99 407.61,407.96 409.32,405.94 411.04,403.90 412.76,401.86 414.48,399.81 416.19,397.76 417.91,395.70 419.63,393.63 421.35,391.55 423.06,389.47 424.78,387.38 426.50,385.28 428.22,383.18 429.94,381.07 431.65,378.95 433.37,376.83 435.09,374.69 436.81,372.56 438.52,370.41 440.24,368.26 441.96,366.10 443.68,363.93 445.39,361.76 447.11,359.58 448.83,357.39 450.55,355.20 452.26,352.99 453.98,350.79 455.70,348.57 457.42,346.35 459.13,344.12 460.85,341.88 462.57,339.64 464.29,337.39 466.00,335.13 467.72,332.87 469.44,330.60 471.16,328.32 472.87,326.04 474.59,323.74 476.31,321.45 478.03,319.14 479.74,316.83 481.46,314.51 483.18,312.18 484.89,309.85 486.61,307.51 488.33,305.16 490.05,302.80 491.76,300.44 493.48,298.07 495.20,295.70 496.92,293.32 498.63,290.93 500.35,288.53 502.07,286.13 503.79,283.72 505.50,281.30 507.22,278.88 508.94,276.45 510.66,274.01 512.38,271.56 514.09,269.11 515.81,266.65 517.53,264.19 519.25,261.71 520.96,259.23" fill="none" stroke="#000010" stroke-width="3.8" stroke-linejoin="round"/>
<polyline points="83.00,666.10 84.72,665.39 86.44,664.67 88.15,663.95 89.87,663.21 91.59,662.47 93.31,661.73 95.02,660.97 96.74,660.21 98.46,659.45 100.17,658.67 101.89,657.89 103.61,657.10 105.33,656.31 107.05,655.51 108.76,654.70 110.48,653.88 112.20,653.06 113.91,652.23 115.63,651.39 117.35,650.55 119.07,649.70 120.78,648.84 122.50,647.98 124.22,647.11 125.94,646.23 127.66,645.34 129.37,644.45 131.09,643.55 132.81,642.64 134.53,641.73 136.24,640.81 137.96,639.88 139.68,638.95 141.40,638.01 143.11,637.06 144.83,636.11 146.55,635.14 148.26,634.17 149.98,633.20 151.70,632.22 153.42,631.23 155.13,630.23 156.85,629.23 158.57,628.22 160.29,627.20 162.00,626.17 163.72,625.14 165.44,624.10 167.16,623.06 168.88,622.00 170.59,620.95 172.31,619.88 174.03,618.81 175.75,617.73 177.46,616.64 179.18,615.54 180.90,614.44 182.62,613.33 184.33,612.22 186.05,611.10 187.77,609.97 189.49,608.83 191.20,607.69 192.92,606.54 194.64,605.38 196.36,604.22 198.07,603.05 199.79,601.87 201.51,600.68 203.23,599.49 204.94,598.29 206.66,597.09 208.38,595.88 210.09,594.66 211.81,593.43 213.53,592.20 215.25,590.96 216.97,589.71 218.68,588.45 220.40,587.19 222.12,585.92 223.84,584.65 225.55,583.37 227.27,582.08 228.99,580.78 230.71,579.48 232.42,578.17 234.14,576.85 235.86,575.53 237.57,574.20 239.29,572.86 241.01,571.51 242.73,570.16 244.44,568.80 246.16,567.44 247.88,566.06 249.60,564.68 251.31,563.30 253.03,561.90 254.75,560.50 256.47,559.10 258.19,557.68 259.90,556.26 261.62,554.83 263.34,553.40 265.06,551.95 266.77,550.50 268.49,549.05 270.21,547.58 271.93,546.11 273.64,544.64 275.36,543.15 277.08,541.66 278.80,540.16 280.51,538.66 282.23,537.15 283.95,535.63 285.66,534.10 287.38,532.57 289.10,531.03 290.82,529.48 292.53,527.93 294.25,526.37 295.97,524.80 297.69,523.23 299.40,521.64 301.12,520.06 302.84,518.46 304.56,516.86 306.27,515.25 307.99,513.63 309.71,512.01 311.43,510.38 313.14,508.74 314.86,507.10 316.58,505.44 318.30,503.79 320.01,502.12 321.73,500.45 323.45,498.77 325.17,497.08 326.88,495.39 328.60,493.69 330.32,491.98 332.04,490.27 333.75,488.55 335.47,486.82 337.19,485.09 338.91,483.34 340.62,481.60 342.34,479.84 344.06,478.08 345.78,476.31 347.50,474.53 349.21,472.75 350.93,470.96 352.65,469.16 354.37,467.36 356.08,465.54 357.80,463.73 359.52,461.90 361.24,460.07 362.95,458.23 364.67,456.38 366.39,454.53 368.11,452.67 369.82,450.80 371.54,448.93 373.26,447.05 374.98,445.16 376.69,443.26 378.41,441.36 380.13,439.45 381.85,437.54 383.56,435.61 385.28,433.69 387.00,431.75 388.72,429.80 390.43,427.85 392.15,425.90 393.87,423.93 395.58,421.96 397.30,419.98 399.02,418.00 400.74,416.00 402.45,414.00 404.17,412.00 405.89,409.99 407.61,407.96 409.32,405.94 411.04,403.90 412.76,401.86 414.48,399.81 416.19,397.76 417.91,395.70 419.63,393.63 421.35,391.55 423.06,389.47 424.78,387.38 426.50,385.28 428.22,383.18 429.94,381.07 431.65,378.95 433.37,376.83 435.09,374.69 436.81,372.56 438.52,370.41 440.24,368.26 441.96,366.10 443.68,363.93 445.39,361.76 447.11,359.58 448.83,357.39 450.55,355.20 452.26,352.99 453.98,350.79 455.70,348.57 457.42,346.35 459.13,344.12 460.85,341.88 462.57,339.64 464.29,337.39 466.00,335.13 467.72,332.87 469.44,330.60 471.16,328.32 472.87,326.04 474.59,323.74 476.31,321.45 478.03,319.14 479.74,316.83 481.46,314.51 483.18,312.18 484.89,309.85 486.61,307.51 488.33,305.16 490.05,302.80 491.76,300.44 493.48,298.07 495.20,295.70 496.92,293.32 498.63,290.93 500.35,288.53 502.07,286.13 503.79,283.72 505.50,281.30 507.22,278.88 508.94,276.45 510.66,274.01 512.38,271.56 514.09,269.11 515.81,266.65 517.53,264.19 519.25,261.71 520.96,259.23" fill="none" stroke="#0000ff" stroke-width="2" stroke-dasharray="4 1.2" stroke-linejoin="round"/>
<circle cx="316.6" cy="505.4" r="3.4" fill="#0000ff" stroke="#000" stroke-width="1.4"/>
<rect x="517" y="257" width="5" height="5" fill="#0000ff"/>
</svg>
<div class="t" style="left:70.16px;top:661.11px;font-size:10.50px;">0</div>
<div class="t" style="left:64.32px;top:641.17px;font-size:10.50px;">50</div>
<div class="t" style="left:58.48px;top:621.22px;font-size:10.50px;">100</div>
<div class="t" style="left:58.48px;top:601.28px;font-size:10.50px;">150</div>
<div class="t" style="left:58.48px;top:581.33px;font-size:10.50px;">200</div>
<div class="t" style="left:58.48px;top:561.39px;font-size:10.50px;">250</div>
<div class="t" style="left:58.48px;top:541.44px;font-size:10.50px;">300</div>
<div class="t" style="left:58.48px;top:521.50px;font-size:10.50px;">350</div>
<div class="t" style="left:58.48px;top:501.55px;font-size:10.50px;">400</div>
<div class="t" style="left:58.48px;top:481.61px;font-size:10.50px;">450</div>
<div class="t" style="left:58.48px;top:461.66px;font-size:10.50px;">500</div>
<div class="t" style="left:58.48px;top:441.72px;font-size:10.50px;">550</div>
<div class="t" style="left:58.48px;top:421.77px;font-size:10.50px;">600</div>
<div class="t" style="left:58.48px;top:401.83px;font-size:10.50px;">650</div>
<div class="t" style="left:58.48px;top:381.88px;font-size:10.50px;">700</div>
<div class="t" style="left:58.48px;top:361.94px;font-size:10.50px;">750</div>
<div class="t" style="left:58.48px;top:341.99px;font-size:10.50px;">800</div>
<div class="t" style="left:58.48px;top:322.05px;font-size:10.50px;">850</div>
<div class="t" style="left:58.48px;top:302.10px;font-size:10.50px;">900</div>
<div class="t" style="left:58.48px;top:282.16px;font-size:10.50px;">950</div>
<div class="t" style="left:49.72px;top:262.21px;font-size:10.50px;">1,000</div>
<div class="t" style="left:79.68px;top:674.91px;font-size:10.50px;">0</div>
<div class="t" style="left:111.11px;top:674.91px;font-size:10.50px;">20</div>
<div class="t" style="left:145.46px;top:674.91px;font-size:10.50px;">40</div>
<div class="t" style="left:179.81px;top:674.91px;font-size:10.50px;">60</div>
<div class="t" style="left:214.16px;top:674.91px;font-size:10.50px;">80</div>
<div class="t" style="left:245.59px;top:674.91px;font-size:10.50px;">100</div>
<div class="t" style="left:279.94px;top:674.91px;font-size:10.50px;">120</div>
<div class="t" style="left:314.29px;top:674.91px;font-size:10.50px;">140</div>
<div class="t" style="left:348.64px;top:674.91px;font-size:10.50px;">160</div>
<div class="t" style="left:382.99px;top:674.91px;font-size:10.50px;">180</div>
<div class="t" style="left:417.34px;top:674.91px;font-size:10.50px;">200</div>
<div class="t" style="left:451.69px;top:674.91px;font-size:10.50px;">220</div>
<div class="t" style="left:486.04px;top:674.91px;font-size:10.50px;">240</div>
<div class="t" style="left:96.00px;top:335.11px;font-size:10.50px;letter-spacing:0.247px;">(2,809)</div>
<div class="r" style="left:595.00px;top:436.00px;width:352.00px;height:262.50px;background:#fff;border:1px solid #646464;"></div>
<div class="r" style="left:596.00px;top:437.00px;width:323.50px;height:19.50px;background:#f0f0f0;"></div>
<div class="r" style="left:596.00px;top:457.00px;width:53.50px;height:240.50px;background:#f0f0f0;"></div>
<div class="r" style="left:930.00px;top:437.00px;width:16.00px;height:260.50px;background:#f0f0f0;"></div>
<div class="r" style="left:930.00px;top:565.00px;width:15.50px;height:17.00px;background:#cdcdcd;"></div>
<svg class="r" style="left:932px;top:442px" width="11" height="8"><path d="M1.5 6 L5.5 2 L9.5 6" fill="none" stroke="#606060" stroke-width="1.8"/></svg>
<svg class="r" style="left:932px;top:686px" width="11" height="8"><path d="M1.5 2 L5.5 6 L9.5 2" fill="none" stroke="#606060" stroke-width="1.8"/></svg>
<svg class="r" style="left:0;top:0" width="1126" height="750"><path d="M649.5 456.5 H919.5" stroke="#c8c8c8" stroke-width="1"/><path d="M649.5 476.5 H919.5" stroke="#c8c8c8" stroke-width="1"/><path d="M649.5 496.5 H919.5" stroke="#c8c8c8" stroke-width="1"/><path d="M649.5 516.5 H919.5" stroke="#c8c8c8" stroke-width="1"/><path d="M649.5 536.5 H919.5" stroke="#c8c8c8" stroke-width="1"/><path d="M649.5 556.5 H919.5" stroke="#c8c8c8" stroke-width="1"/><path d="M649.5 576.5 H919.5" stroke="#c8c8c8" stroke-width="1"/><path d="M649.5 596.5 H919.5" stroke="#c8c8c8" stroke-width="1"/><path d="M649.5 616.5 H919.5" stroke="#c8c8c8" stroke-width="1"/><path d="M649.5 636.5 H919.5" stroke="#c8c8c8" stroke-width="1"/><path d="M649.5 656.5 H919.5" stroke="#c8c8c8" stroke-width="1"/><path d="M649.5 676.5 H919.5" stroke="#c8c8c8" stroke-width="1"/><path d="M649.5 696.5 H919.5" stroke="#c8c8c8" stroke-width="1"/><path d="M703.5 456 V698" stroke="#c8c8c8" stroke-width="1"/><path d="M757.5 456 V698" stroke="#c8c8c8" stroke-width="1"/><path d="M811.5 456 V698" stroke="#c8c8c8" stroke-width="1"/><path d="M865.5 456 V698" stroke="#c8c8c8" stroke-width="1"/><path d="M919.5 456 V698" stroke="#c8c8c8" stroke-width="1"/><path d="M595.5 456.5 H919.5 M649.5 436 V698 M703.5 436 V456.5 M757.5 436 V456.5 M811.5 436 V456.5 M865.5 436 V456.5 M919.5 436 V456.5" stroke="#000" stroke-width="1.2"/><path d="M595.5 476.5 H649.5" stroke="#000" stroke-width="1.2"/><path d="M595.5 496.5 H649.5" stroke="#000" stroke-width="1.2"/><path d="M595.5 516.5 H649.5" stroke="#000" stroke-width="1.2"/><path d="M595.5 536.5 H649.5" stroke="#000" stroke-width="1.2"/><path d="M595.5 556.5 H649.5" stroke="#000" stroke-width="1.2"/><path d="M595.5 576.5 H649.5" stroke="#000" stroke-width="1.2"/><path d="M595.5 596.5 H649.5" stroke="#000" stroke-width="1.2"/><path d="M595.5 616.5 H649.5" stroke="#000" stroke-width="1.2"/><path d="M595.5 636.5 H649.5" stroke="#000" stroke-width="1.2"/><path d="M595.5 656.5 H649.5" stroke="#000" stroke-width="1.2"/><path d="M595.5 676.5 H649.5" stroke="#000" stroke-width="1.2"/><path d="M595.5 696.5 H649.5" stroke="#000" stroke-width="1.2"/></svg>
<div class="r" style="left:812.00px;top:617.00px;width:53.50px;height:19.50px;background:#0078d7;"></div>
<div class="t" style="left:652.50px;top:441.19px;font-size:11.00px;">R</div>
<div class="t" style="left:706.50px;top:441.19px;font-size:11.00px;">G</div>
<div class="t" style="left:760.50px;top:441.19px;font-size:11.00px;">B</div>
<div class="t" style="left:814.50px;top:441.19px;font-size:11.00px;letter-spacing:-0.179px;">Select</div>
<div class="t" style="left:598.70px;top:461.19px;font-size:11.00px;">128</div>
<div class="t" style="left:652.70px;top:461.19px;font-size:11.00px;letter-spacing:-0.166px;">92.5625</div>
<div class="t" style="left:706.70px;top:461.19px;font-size:11.00px;letter-spacing:-0.166px;">92.5625</div>
<div class="t" style="left:760.70px;top:461.19px;font-size:11.00px;letter-spacing:-0.166px;">92.5625</div>
<div class="t" style="left:814.50px;top:461.19px;font-size:11.00px;letter-spacing:0.670px;">---</div>
<div class="t" style="left:598.70px;top:481.19px;font-size:11.00px;">129</div>
<div class="t" style="left:652.70px;top:481.19px;font-size:11.00px;letter-spacing:-0.166px;">93.5625</div>
<div class="t" style="left:706.70px;top:481.19px;font-size:11.00px;letter-spacing:-0.166px;">93.5625</div>
<div class="t" style="left:760.70px;top:481.19px;font-size:11.00px;letter-spacing:-0.166px;">93.5625</div>
<div class="t" style="left:814.50px;top:481.19px;font-size:11.00px;letter-spacing:0.670px;">---</div>
<div class="t" style="left:598.70px;top:501.19px;font-size:11.00px;">130</div>
<div class="t" style="left:652.70px;top:501.19px;font-size:11.00px;letter-spacing:-0.166px;">94.5625</div>
<div class="t" style="left:706.70px;top:501.19px;font-size:11.00px;letter-spacing:-0.166px;">94.5625</div>
<div class="t" style="left:760.70px;top:501.19px;font-size:11.00px;letter-spacing:-0.166px;">94.5625</div>
<div class="t" style="left:814.50px;top:501.19px;font-size:11.00px;letter-spacing:0.670px;">---</div>
<div class="t" style="left:598.70px;top:521.19px;font-size:11.00px;">131</div>
<div class="t" style="left:652.70px;top:521.19px;font-size:11.00px;letter-spacing:-0.166px;">95.5625</div>
<div class="t" style="left:706.70px;top:521.19px;font-size:11.00px;letter-spacing:-0.166px;">95.5625</div>
<div class="t" style="left:760.70px;top:521.19px;font-size:11.00px;letter-spacing:-0.166px;">95.5625</div>
<div class="t" style="left:814.50px;top:521.19px;font-size:11.00px;letter-spacing:0.670px;">---</div>
<div class="t" style="left:598.70px;top:541.19px;font-size:11.00px;">132</div>
<div class="t" style="left:652.70px;top:541.19px;font-size:11.00px;letter-spacing:-0.166px;">96.6250</div>
<div class="t" style="left:706.70px;top:541.19px;font-size:11.00px;letter-spacing:-0.166px;">96.6250</div>
<div class="t" style="left:760.70px;top:541.19px;font-size:11.00px;letter-spacing:-0.166px;">96.6250</div>
<div class="t" style="left:814.50px;top:541.19px;font-size:11.00px;letter-spacing:0.670px;">---</div>
<div class="t" style="left:598.70px;top:561.19px;font-size:11.00px;">133</div>
<div class="t" style="left:652.70px;top:561.19px;font-size:11.00px;letter-spacing:-0.166px;">97.6250</div>
<div class="t" style="left:706.70px;top:561.19px;font-size:11.00px;letter-spacing:-0.166px;">97.6250</div>
<div class="t" style="left:760.70px;top:561.19px;font-size:11.00px;letter-spacing:-0.166px;">97.6250</div>
<div class="t" style="left:814.50px;top:561.19px;font-size:11.00px;letter-spacing:0.670px;">---</div>
<div class="t" style="left:598.70px;top:581.19px;font-size:11.00px;">134</div>
<div class="t" style="left:652.70px;top:581.19px;font-size:11.00px;letter-spacing:-0.166px;">98.6250</div>
<div class="t" style="left:706.70px;top:581.19px;font-size:11.00px;letter-spacing:-0.166px;">98.6250</div>
<div class="t" style="left:760.70px;top:581.19px;font-size:11.00px;letter-spacing:-0.166px;">98.6250</div>
<div class="t" style="left:814.50px;top:581.19px;font-size:11.00px;letter-spacing:0.670px;">---</div>
<div class="t" style="left:598.70px;top:601.19px;font-size:11.00px;">135</div>
<div class="t" style="left:652.70px;top:601.19px;font-size:11.00px;letter-spacing:-0.166px;">99.6875</div>
<div class="t" style="left:706.70px;top:601.19px;font-size:11.00px;letter-spacing:-0.166px;">99.6875</div>
<div class="t" style="left:760.70px;top:601.19px;font-size:11.00px;letter-spacing:-0.166px;">99.6875</div>
<div class="t" style="left:814.50px;top:601.19px;font-size:11.00px;letter-spacing:0.670px;">---</div>
<div class="t" style="left:598.70px;top:621.19px;font-size:11.00px;">136</div>
<div class="t" style="left:652.70px;top:621.19px;font-size:11.00px;letter-spacing:-0.173px;">100.6875</div>
<div class="t" style="left:706.70px;top:621.19px;font-size:11.00px;letter-spacing:-0.173px;">100.6875</div>
<div class="t" style="left:760.70px;top:621.19px;font-size:11.00px;letter-spacing:-0.173px;">100.6875</div>
<div class="t" style="left:814.50px;top:621.19px;font-size:11.00px;letter-spacing:-1.279px;color:#fff;">RGB</div>
<div class="t" style="left:598.70px;top:641.19px;font-size:11.00px;">137</div>
<div class="t" style="left:652.70px;top:641.19px;font-size:11.00px;letter-spacing:-0.173px;">101.7500</div>
<div class="t" style="left:706.70px;top:641.19px;font-size:11.00px;letter-spacing:-0.173px;">101.7500</div>
<div class="t" style="left:760.70px;top:641.19px;font-size:11.00px;letter-spacing:-0.173px;">101.7500</div>
<div class="t" style="left:814.50px;top:641.19px;font-size:11.00px;letter-spacing:0.670px;">---</div>
<div class="t" style="left:598.70px;top:661.19px;font-size:11.00px;">138</div>
<div class="t" style="left:652.70px;top:661.19px;font-size:11.00px;letter-spacing:-0.173px;">102.8125</div>
<div class="t" style="left:706.70px;top:661.19px;font-size:11.00px;letter-spacing:-0.173px;">102.8125</div>
<div class="t" style="left:760.70px;top:661.19px;font-size:11.00px;letter-spacing:-0.173px;">102.8125</div>
<div class="t" style="left:814.50px;top:661.19px;font-size:11.00px;letter-spacing:0.670px;">---</div>
<div class="t" style="left:598.70px;top:681.19px;font-size:11.00px;">139</div>
<div class="t" style="left:652.70px;top:681.19px;font-size:11.00px;letter-spacing:-0.173px;">103.8750</div>
<div class="t" style="left:706.70px;top:681.19px;font-size:11.00px;letter-spacing:-0.173px;">103.8750</div>
<div class="t" style="left:760.70px;top:681.19px;font-size:11.00px;letter-spacing:-0.173px;">103.8750</div>
<div class="t" style="left:814.50px;top:681.19px;font-size:11.00px;letter-spacing:0.670px;">---</div>
<div class="r" style="left:112.70px;top:83.30px;width:67.30px;height:36.70px;border:3px solid #ff1a1a;border-radius:3px;"></div>
<div class="r" style="left:127.20px;top:158.30px;width:87.30px;height:36.50px;border:3px solid #ff1a1a;border-radius:3px;"></div>
<div class="r" style="left:220.40px;top:158.30px;width:87.60px;height:36.50px;border:3px solid #ff1a1a;border-radius:3px;"></div>
<div class="r" style="left:62.30px;top:230.00px;width:485.30px;height:466.70px;border:3px solid #ff1a1a;border-radius:3px;"></div>
<div class="r" style="left:554.50px;top:280.50px;width:67.30px;height:30.70px;border:3px solid #ff1a1a;border-radius:3px;"></div>
<div class="r" style="left:829.20px;top:305.10px;width:131.60px;height:54.20px;border:3px solid #ff1a1a;border-radius:3px;"></div>
<div class="t" style="left:179.40px;top:137.89px;font-size:19.50px;color:#ff1a1a;">B</div>
<div class="t" style="left:250.30px;top:133.99px;font-size:19.50px;color:#ff1a1a;">A</div>
<div class="t" style="left:446.50px;top:200.22px;font-size:21.00px;color:#ff1a1a;">2</div>
<div class="t" style="left:584.50px;top:255.09px;font-size:19.50px;color:#ff1a1a;">1</div>
<div class="t" style="left:847.50px;top:370.57px;font-size:20.00px;color:#ff1a1a;">3</div>
<div class="t wm" style="left:814.3px;top:-260.3px"><b>S</b><b>G</b><b>M</b><b>Z</b><b>N</b><b>B</b><b>0</b><b>0</b><b>1</b><b>0</b><b>4</b><b>&nbsp;</b><b>&nbsp;</b><b>x</b><b>i</b><b>n</b><b>h</b><b>u</b><b>a</b><b>.</b><b>y</b><b>e</b><b>&nbsp;</b><b>&nbsp;</b><b>2</b><b>0</b><b>2</b><b>1</b><b>-</b><b>0</b><b>3</b><b>-</b><b>1</b><b>0</b><b>&nbsp;</b><b>&nbsp;</b><b>1</b><b>1</b><b>:</b><b>2</b><b>5</b><b>:</b><b>5</b><b>3</b></div>
<div class="t wm" style="left:420.0px;top:-166.9px"><b>S</b><b>G</b><b>M</b><b>Z</b><b>N</b><b>B</b><b>0</b><b>0</b><b>1</b><b>0</b><b>4</b><b>&nbsp;</b><b>&nbsp;</b><b>x</b><b>i</b><b>n</b><b>h</b><b>u</b><b>a</b><b>.</b><b>y</b><b>e</b><b>&nbsp;</b><b>&nbsp;</b><b>2</b><b>0</b><b>2</b><b>1</b><b>-</b><b>0</b><b>3</b><b>-</b><b>1</b><b>0</b><b>&nbsp;</b><b>&nbsp;</b><b>1</b><b>1</b><b>:</b><b>2</b><b>4</b><b>:</b><b>2</b><b>3</b></div>
<div class="t wm" style="left:653.4px;top:17.0px"><b>S</b><b>G</b><b>M</b><b>Z</b><b>N</b><b>B</b><b>0</b><b>0</b><b>1</b><b>0</b><b>4</b><b>&nbsp;</b><b>&nbsp;</b><b>x</b><b>i</b><b>n</b><b>h</b><b>u</b><b>a</b><b>.</b><b>y</b><b>e</b><b>&nbsp;</b><b>&nbsp;</b><b>2</b><b>0</b><b>2</b><b>1</b><b>-</b><b>0</b><b>3</b><b>-</b><b>1</b><b>0</b><b>&nbsp;</b><b>&nbsp;</b><b>1</b><b>1</b><b>:</b><b>2</b><b>5</b><b>:</b><b>5</b><b>3</b></div>
<div class="t wm" style="left:1137.4px;top:246.7px"><b>S</b><b>G</b><b>M</b><b>Z</b><b>N</b><b>B</b><b>0</b><b>0</b><b>1</b><b>0</b><b>4</b><b>&nbsp;</b><b>&nbsp;</b><b>x</b><b>i</b><b>n</b><b>h</b><b>u</b><b>a</b><b>.</b><b>y</b><b>e</b><b>&nbsp;</b><b>&nbsp;</b><b>2</b><b>0</b><b>2</b><b>1</b><b>-</b><b>0</b><b>3</b><b>-</b><b>1</b><b>0</b><b>&nbsp;</b><b>&nbsp;</b><b>1</b><b>1</b><b>:</b><b>2</b><b>4</b><b>:</b><b>2</b><b>3</b></div>
<div class="t wm" style="left:-224.9px;top:-119.3px"><b>S</b><b>G</b><b>M</b><b>Z</b><b>N</b><b>B</b><b>0</b><b>0</b><b>1</b><b>0</b><b>4</b><b>&nbsp;</b><b>&nbsp;</b><b>x</b><b>i</b><b>n</b><b>h</b><b>u</b><b>a</b><b>.</b><b>y</b><b>e</b><b>&nbsp;</b><b>&nbsp;</b><b>2</b><b>0</b><b>2</b><b>1</b><b>-</b><b>0</b><b>3</b><b>-</b><b>1</b><b>0</b><b>&nbsp;</b><b>&nbsp;</b><b>1</b><b>1</b><b>:</b><b>2</b><b>5</b><b>:</b><b>5</b><b>3</b></div>
<div class="t wm" style="left:259.1px;top:110.4px"><b>S</b><b>G</b><b>M</b><b>Z</b><b>N</b><b>B</b><b>0</b><b>0</b><b>1</b><b>0</b><b>4</b><b>&nbsp;</b><b>&nbsp;</b><b>x</b><b>i</b><b>n</b><b>h</b><b>u</b><b>a</b><b>.</b><b>y</b><b>e</b><b>&nbsp;</b><b>&nbsp;</b><b>2</b><b>0</b><b>2</b><b>1</b><b>-</b><b>0</b><b>3</b><b>-</b><b>1</b><b>0</b><b>&nbsp;</b><b>&nbsp;</b><b>1</b><b>1</b><b>:</b><b>2</b><b>4</b><b>:</b><b>2</b><b>3</b></div>
<div class="t wm" style="left:492.5px;top:294.3px"><b>S</b><b>G</b><b>M</b><b>Z</b><b>N</b><b>B</b><b>0</b><b>0</b><b>1</b><b>0</b><b>4</b><b>&nbsp;</b><b>&nbsp;</b><b>x</b><b>i</b><b>n</b><b>h</b><b>u</b><b>a</b><b>.</b><b>y</b><b>e</b><b>&nbsp;</b><b>&nbsp;</b><b>2</b><b>0</b><b>2</b><b>1</b><b>-</b><b>0</b><b>3</b><b>-</b><b>1</b><b>0</b><b>&nbsp;</b><b>&nbsp;</b><b>1</b><b>1</b><b>:</b><b>2</b><b>5</b><b>:</b><b>5</b><b>3</b></div>
<div class="t wm" style="left:976.5px;top:524.0px"><b>S</b><b>G</b><b>M</b><b>Z</b><b>N</b><b>B</b><b>0</b><b>0</b><b>1</b><b>0</b><b>4</b><b>&nbsp;</b><b>&nbsp;</b><b>x</b><b>i</b><b>n</b><b>h</b><b>u</b><b>a</b><b>.</b><b>y</b><b>e</b><b>&nbsp;</b><b>&nbsp;</b><b>2</b><b>0</b><b>2</b><b>1</b><b>-</b><b>0</b><b>3</b><b>-</b><b>1</b><b>0</b><b>&nbsp;</b><b>&nbsp;</b><b>1</b><b>1</b><b>:</b><b>2</b><b>4</b><b>:</b><b>2</b><b>3</b></div>
<div class="t wm" style="left:-385.8px;top:158.0px"><b>S</b><b>G</b><b>M</b><b>Z</b><b>N</b><b>B</b><b>0</b><b>0</b><b>1</b><b>0</b><b>4</b><b>&nbsp;</b><b>&nbsp;</b><b>x</b><b>i</b><b>n</b><b>h</b><b>u</b><b>a</b><b>.</b><b>y</b><b>e</b><b>&nbsp;</b><b>&nbsp;</b><b>2</b><b>0</b><b>2</b><b>1</b><b>-</b><b>0</b><b>3</b><b>-</b><b>1</b><b>0</b><b>&nbsp;</b><b>&nbsp;</b><b>1</b><b>1</b><b>:</b><b>2</b><b>5</b><b>:</b><b>5</b><b>3</b></div>
<div class="t wm" style="left:98.2px;top:387.7px"><b>S</b><b>G</b><b>M</b><b>Z</b><b>N</b><b>B</b><b>0</b><b>0</b><b>1</b><b>0</b><b>4</b><b>&nbsp;</b><b>&nbsp;</b><b>x</b><b>i</b><b>n</b><b>h</b><b>u</b><b>a</b><b>.</b><b>y</b><b>e</b><b>&nbsp;</b><b>&nbsp;</b><b>2</b><b>0</b><b>2</b><b>1</b><b>-</b><b>0</b><b>3</b><b>-</b><b>1</b><b>0</b><b>&nbsp;</b><b>&nbsp;</b><b>1</b><b>1</b><b>:</b><b>2</b><b>4</b><b>:</b><b>2</b><b>3</b></div>
<div class="t wm" style="left:331.6px;top:571.6px"><b>S</b><b>G</b><b>M</b><b>Z</b><b>N</b><b>B</b><b>0</b><b>0</b><b>1</b><b>0</b><b>4</b><b>&nbsp;</b><b>&nbsp;</b><b>x</b><b>i</b><b>n</b><b>h</b><b>u</b><b>a</b><b>.</b><b>y</b><b>e</b><b>&nbsp;</b><b>&nbsp;</b><b>2</b><b>0</b><b>2</b><b>1</b><b>-</b><b>0</b><b>3</b><b>-</b><b>1</b><b>0</b><b>&nbsp;</b><b>&nbsp;</b><b>1</b><b>1</b><b>:</b><b>2</b><b>5</b><b>:</b><b>5</b><b>3</b></div>
<div class="t wm" style="left:-62.7px;top:665.0px"><b>S</b><b>G</b><b>M</b><b>Z</b><b>N</b><b>B</b><b>0</b><b>0</b><b>1</b><b>0</b><b>4</b><b>&nbsp;</b><b>&nbsp;</b><b>x</b><b>i</b><b>n</b><b>h</b><b>u</b><b>a</b><b>.</b><b>y</b><b>e</b><b>&nbsp;</b><b>&nbsp;</b><b>2</b><b>0</b><b>2</b><b>1</b><b>-</b><b>0</b><b>3</b><b>-</b><b>1</b><b>0</b><b>&nbsp;</b><b>&nbsp;</b><b>1</b><b>1</b><b>:</b><b>2</b><b>4</b><b>:</b><b>2</b><b>3</b></div>
</body></html>
